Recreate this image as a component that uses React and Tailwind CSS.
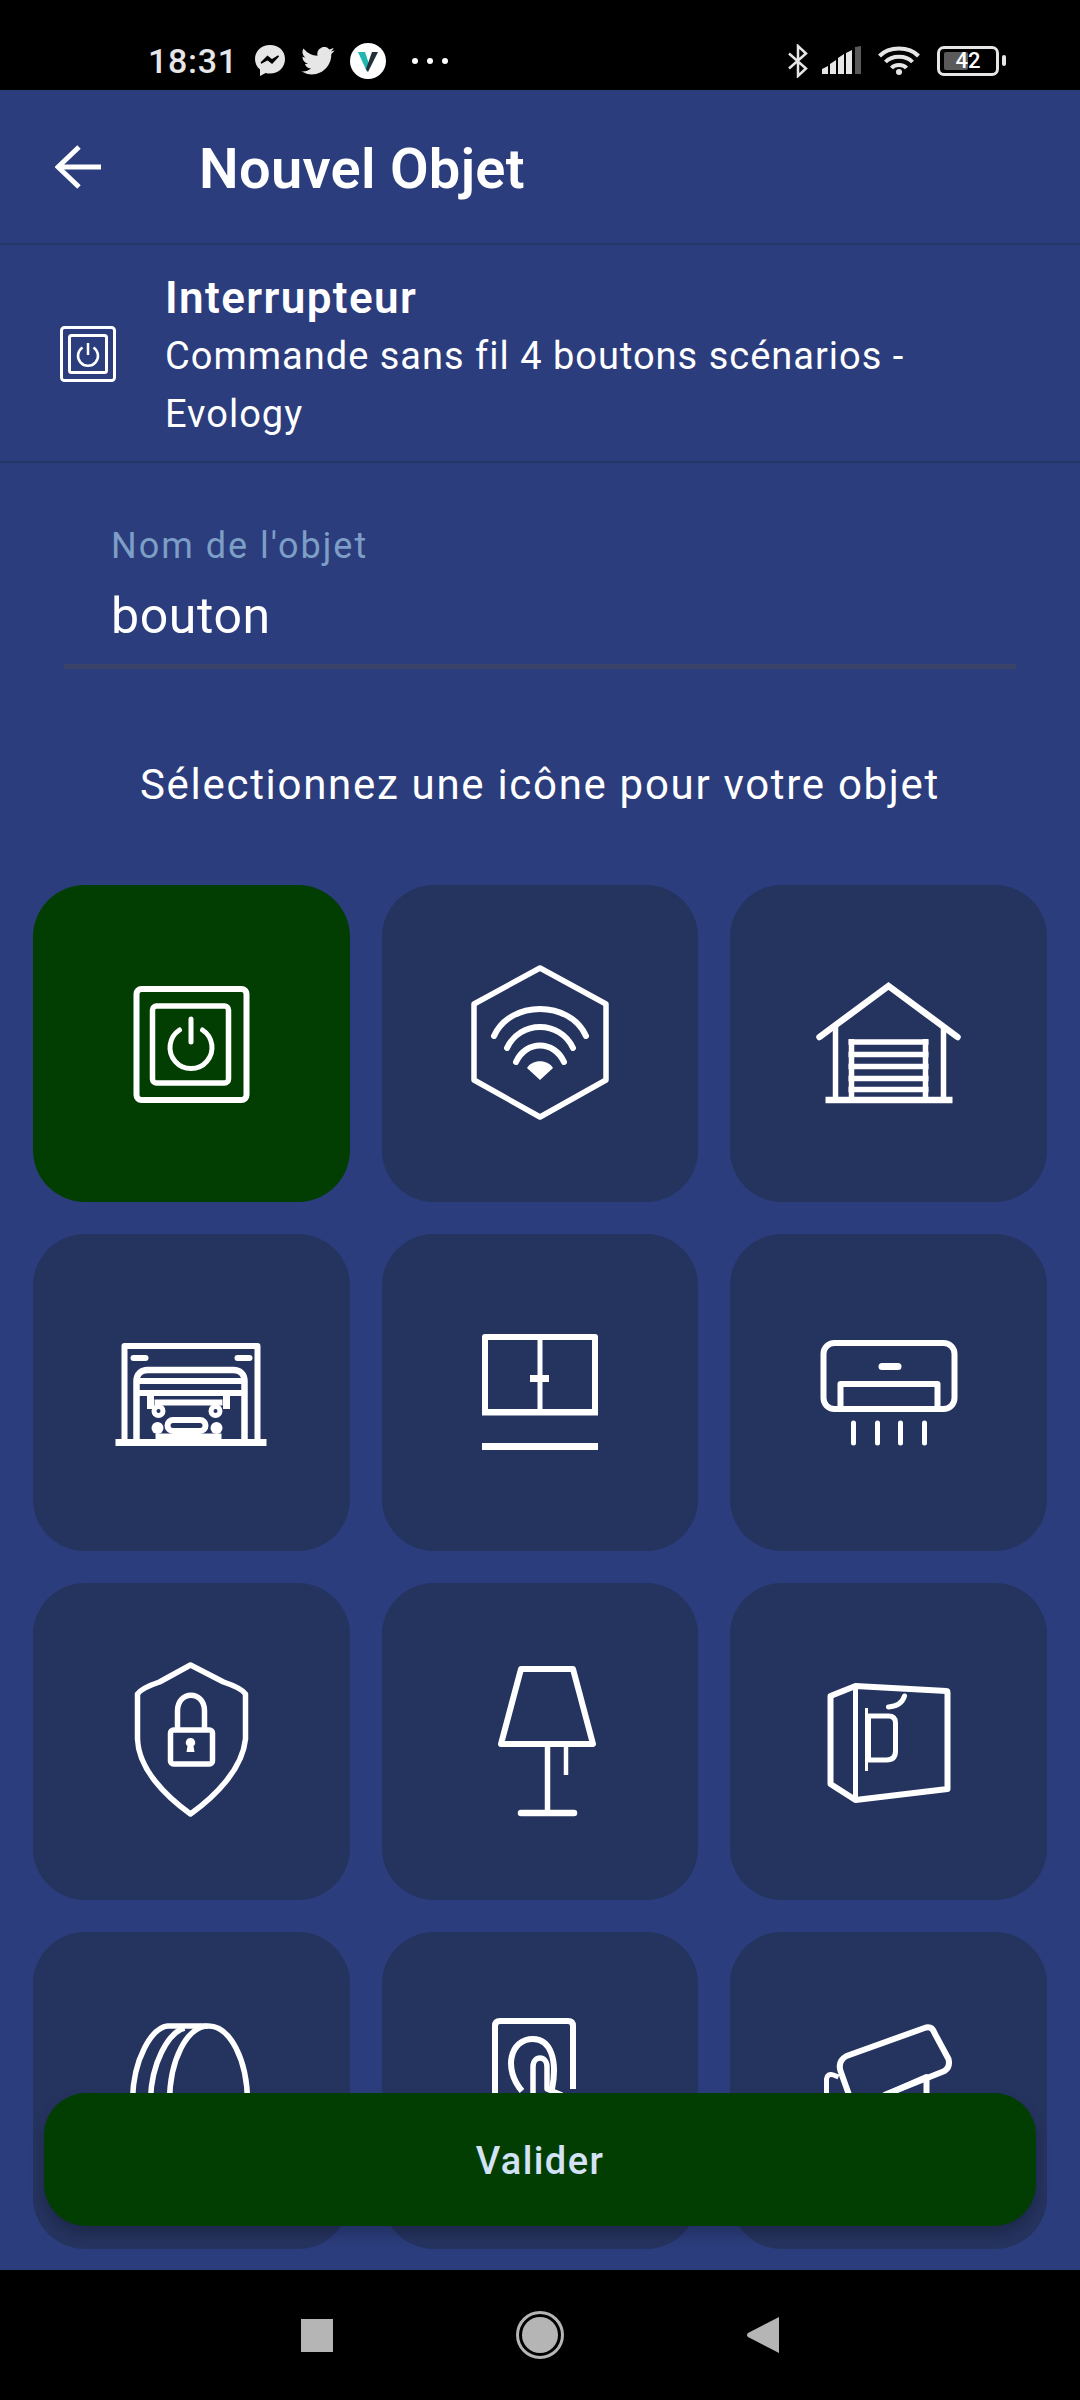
import React from "react";

// icons are drawn in page coordinates, the viewBox is centred on the tile
function Icon({ cx, cy, size = 180, children }) {
  return (
    <svg
      width={size}
      height={size}
      viewBox={`${cx - size / 2} ${cy - size / 2} ${size} ${size}`}
      fill="none"
      stroke="#fff"
      strokeWidth="6"
      strokeLinejoin="round"
      className="overflow-visible shrink-0"
    >
      {children}
    </svg>
  );
}

function PowerIcon() {
  return (
    <Icon cx={191.5} cy={1044}>
      <rect x="137" y="989" width="110" height="111" rx="5" />
      <rect x="153" y="1006" width="76" height="77" rx="4" strokeWidth="5.5" />
      <path d="M180 1030a21 21 0 1 0 23 0" strokeWidth="5" strokeLinecap="round" />
      <path d="M191.5 1019v23" strokeWidth="5" strokeLinecap="round" />
    </Icon>
  );
}

function WifiHexIcon() {
  return (
    <Icon cx={540} cy={1044}>
      <path d="M540 968L606 1004V1080L540 1117L474 1080V1004Z" strokeWidth="5.5" />
      <path d="M494 1036C510 1000 570 1000 586 1036" strokeLinecap="round" />
      <path d="M507 1048C520 1020 560 1020 573 1048" strokeLinecap="round" />
      <path d="M516 1062C526 1040 554 1040 564 1062" strokeLinecap="round" />
      <path d="M540 1080L527 1068C532 1059 548 1059 553 1068Z" fill="#fff" stroke="none" />
    </Icon>
  );
}

function GarageIcon() {
  return (
    <Icon cx={888.5} cy={1044}>
      <path d="M819 1037L888 986L957 1037" strokeWidth="6.5" strokeLinecap="round" strokeLinejoin="miter" />
      <path d="M835 1026V1097M943 1026V1097" strokeWidth="5.5" />
      <path d="M825 1100H952" strokeWidth="6.5" />
      <path d="M851 1039V1097M925 1039V1097" strokeWidth="5.5" />
      <path d="M848 1042H928M848 1054.5H928M848 1066.5H928M848 1078.5H928M848 1089.5H928" strokeWidth="5.5" />
    </Icon>
  );
}

function CarGarageIcon() {
  return (
    <Icon cx={191.5} cy={1394}>
      <path d="M125 1443V1347H258V1443" />
      <path d="M116 1443.5H267" strokeWidth="7" />
      <rect x="131" y="1356" width="18" height="6" rx="3" fill="#fff" stroke="none" />
      <rect x="235" y="1356" width="18" height="6" rx="3" fill="#fff" stroke="none" />
      <path d="M137 1441V1382C137 1375 142 1371 148 1371H234C240 1371 245 1375 245 1382V1441" strokeWidth="6.5" />
      <path d="M137 1382H245M137 1394H245" />
      <path d="M151 1394V1410M227 1394V1410" strokeWidth="7" />
      <path d="M155 1403.5H223" />
      <circle cx="159" cy="1412" r="4.5" strokeWidth="5" />
      <circle cx="216" cy="1412" r="4.5" strokeWidth="5" />
      <circle cx="158" cy="1429" r="6" fill="#fff" stroke="none" />
      <circle cx="217" cy="1429" r="6" fill="#fff" stroke="none" />
      <rect x="168" y="1421" width="38" height="11" rx="5.5" />
      <path d="M156 1437.5H222" />
    </Icon>
  );
}

function WindowIcon() {
  return (
    <Icon cx={540} cy={1394}>
      <path d="M485 1338H595V1413H485Z" />
      <path d="M482 1413.5H598" />
      <path d="M540 1338V1411" strokeWidth="5" />
      <path d="M530 1379.5H549" strokeWidth="7" />
      <path d="M482 1447.5H598" strokeWidth="7" />
    </Icon>
  );
}

function AcIcon() {
  return (
    <Icon cx={888.5} cy={1394}>
      <rect x="823" y="1344" width="131" height="66" rx="11" />
      <rect x="878" y="1364" width="23" height="7" rx="3.5" fill="#fff" stroke="none" />
      <path d="M840 1410V1385H937V1410" />
      <path d="M853 1424V1444M877 1424V1444M900 1424V1444M924 1424V1444" strokeWidth="5" strokeLinecap="round" />
    </Icon>
  );
}

function ShieldIcon() {
  return (
    <Icon cx={191.5} cy={1743}>
      <path d="M191 1666L160 1683Q142 1689 138 1695V1740C139 1770 166 1797 191 1815C216 1797 243 1770 246 1740V1695Q242 1689 224 1683Z" strokeWidth="5.5" />
      <rect x="171" y="1731" width="42" height="34" rx="3" strokeWidth="5.5" />
      <path d="M178 1730V1712C178 1691 205 1691 205 1712V1730" strokeWidth="5.5" />
      <path d="M191 1739a4.5 4.5 0 0 1 3 8l1 6h-8l1-6a4.5 4.5 0 0 1 3-8Z" fill="#fff" stroke="none" />
    </Icon>
  );
}

function LampIcon() {
  return (
    <Icon cx={540} cy={1743}>
      <path d="M521 1670H573L593 1745H501Z" />
      <path d="M547.500 1748V1812" strokeWidth="5.5" />
      <path d="M521 1814H574" strokeWidth="6.5" strokeLinecap="round" />
      <path d="M566 1748V1776" strokeWidth="4.5" />
    </Icon>
  );
}

function BoxIcon() {
  return (
    <Icon cx={888.5} cy={1743}>
      <path d="M830 1697L855 1687L946 1692Q947 1692 947 1694V1790L855 1801L830 1785Z" />
      <path d="M855 1688V1800" strokeWidth="5" />
      <path d="M868 1717H888Q895 1717 895 1724V1752Q895 1761 886 1761H868Z" strokeWidth="5" />
      <path d="M866 1709V1772" strokeWidth="3" />
      <path d="M888 1708Q901 1707 904 1697" strokeWidth="5" strokeLinecap="round" />
    </Icon>
  );
}

function DiscIcon() {
  return (
    <Icon cx={191.5} cy={2092}>
      <ellipse cx="209" cy="2103" rx="39" ry="76" strokeWidth="5.5" />
      <path d="M208 2027H168C152 2029 134 2060 133 2100" strokeWidth="5.5" />
      <path d="M185 2029C168 2034 152 2065 151 2100" strokeWidth="5.5" />
    </Icon>
  );
}

function TouchIcon() {
  return (
    <Icon cx={540} cy={2092}>
      <path d="M495 2100V2027Q495 2022 500 2022H568Q573 2022 573 2027V2090" />
      <path d="M522 2092C503 2070 510 2040 533 2040C550 2040 558 2060 552 2090" />
      <path d="M533 2100V2068C533 2056 547 2056 547 2068V2090L562 2096" strokeWidth="5.5" />
    </Icon>
  );
}

function CameraIcon() {
  return (
    <Icon cx={888.5} cy={2092}>
      <path d="M850 2100L840 2072Q837 2062 846 2057L924 2029Q931 2026 934 2034L948 2060Q950 2068 944 2072L884 2096" />
      <path d="M840 2100L826 2098V2080Q827 2074 833 2076L838 2078" strokeWidth="5" />
      <path d="M880 2098L926 2078V2100" />
    </Icon>
  );
}

const tiles = [
  PowerIcon, WifiHexIcon, GarageIcon,
  CarGarageIcon, WindowIcon, AcIcon,
  ShieldIcon, LampIcon, BoxIcon,
  DiscIcon, TouchIcon, CameraIcon,
];

function StatusBar() {
  return (
    <div className="h-[90px] bg-black flex items-center pt-[31px] pl-[148px] shrink-0 text-[#e6e6e6]">
      <span className="w-[106px] text-[34px] font-medium leading-none tracking-[0.7px]">18:31</span>
      <svg width="32" height="34" viewBox="0 0 32 34" className="mr-[15px]">
        <path d="M16 1C7.500 1 1 7 1 15c0 4.300 1.900 8 5 10.500V32l5.600-3c1.400.4 2.900.6 4.400.6 8.500 0 15-6.200 15-14.600S24.500 1 16 1z" fill="#e6e6e6" />
        <path d="M7 19l6.500-6.500 4.500 3.500 6.500-4-6.500 7-4.500-3.500z" fill="#000" stroke="#000" strokeWidth="1.500" />
      </svg>
      <svg width="34" height="28" viewBox="0 0 24 20" className="mr-[15px]">
        <path d="M23.900 2.400a9.800 9.800 0 0 1-2.800.8 4.900 4.900 0 0 0 2.100-2.700 9.800 9.800 0 0 1-3.100 1.200 4.900 4.900 0 0 0-8.400 4.500A13.900 13.900 0 0 1 1.600 1a4.900 4.900 0 0 0 1.500 6.600 4.900 4.900 0 0 1-2.200-.6c0 2.400 1.700 4.400 3.900 4.900a4.900 4.900 0 0 1-2.200.1 4.900 4.900 0 0 0 4.600 3.400A9.900 9.900 0 0 1 0 17.400 13.900 13.900 0 0 0 7.500 19.600c9.100 0 14-7.500 14-14v-.6a10 10 0 0 0 2.400-2.600z" fill="#e6e6e6" />
      </svg>
      <svg width="36" height="36" viewBox="0 0 36 36" className="mr-[26px]">
        <circle cx="18" cy="18" r="18" fill="#fff" />
        <path d="M8 9h7l5 15-3 5z" fill="#1fb8ae" />
        <path d="M28 9h-6l-6 17 2 3z" fill="#22303a" />
      </svg>
      <div className="flex gap-[9px]">
        <span className="w-[6px] h-[6px] rounded-full bg-white" />
        <span className="w-[6px] h-[6px] rounded-full bg-white" />
        <span className="w-[6px] h-[6px] rounded-full bg-white" />
      </div>
      <div className="flex-1" />
      <svg width="22" height="34" viewBox="0 0 22 34" fill="none" stroke="#e6e6e6" strokeWidth="2.500" className="mr-[13px]">
        <path d="M2 9.500L19 24.500L11 32V2L19 9.500L2 24.500" />
      </svg>
      <svg width="40" height="29" viewBox="0 0 40 29" className="mr-[16px]">
        <path d="M0 28v-5l6-3v8zM8 28V18l6-4v14zM16 28V12l6-4v20zM24 28V7l6-3v24z" fill="#e6e6e6" />
        <path d="M33 28V1l6-1v28z" fill="#5a5a5a" />
      </svg>
      <svg width="43" height="31" viewBox="0 0 43 31" fill="none" stroke="#e6e6e6" strokeWidth="4" className="mr-[16px]">
        <path d="M1.500 11C11 1 31 1 40.500 11" />
        <path d="M7.500 17C14 10 28 10 34.500 17" />
        <path d="M13.500 23C17 19 25 19 28.500 23" />
        <circle cx="21" cy="27" r="3" fill="#e6e6e6" stroke="none" />
      </svg>
      <div className="relative w-[62px] h-[30px] rounded-[7px] border-[3px] border-[#e6e6e6] mr-[3px] flex items-center justify-center">
        <div className="absolute left-[4px] top-[3px] bottom-[3px] w-[24px] bg-[#5a5a5a] rounded-[2px]" />
        <span className="relative text-[22px] font-medium leading-none text-white">42</span>
      </div>
      <div className="w-[4px] h-[11px] rounded-full bg-[#e6e6e6] mr-[74px]" />
    </div>
  );
}

export default function App() {
  return (
    <div className="w-[1080px] h-[2400px] flex flex-col bg-[#2b3d7c] font-['Roboto',sans-serif] text-white overflow-hidden">
      <StatusBar />

      <main className="relative flex-1 min-h-0 overflow-hidden">
        <header className="h-[155px] flex items-center pl-[55px] border-b-2 border-[#263668]">
          <svg width="46" height="44" viewBox="0 0 46 44" fill="none" stroke="#fff" strokeWidth="5" className="mr-[98px]">
            <path d="M24 2L3 22L24 42" />
            <path d="M3 22H46" />
          </svg>
          <h1 className="text-[56px] font-semibold leading-none tracking-[0.3px] mt-[4px]">Nouvel Objet</h1>
        </header>

        <section className="h-[218px] flex items-center pl-[60px] border-b-2 border-[#263668]">
          <svg width="56" height="56" viewBox="0 0 56 56" fill="none" stroke="#fff" strokeWidth="3" className="mr-[49px] shrink-0 mt-[1px]">
            <rect x="1.500" y="1.500" width="53" height="53" rx="3" />
            <rect x="9.500" y="9.500" width="37" height="37" rx="2" />
            <path d="M22.500 21.500a10 10 0 1 0 11 0M28 17v12" strokeWidth="2.500" />
          </svg>
          <div className="leading-[58px] pt-[6px]">
            <div className="text-[44px] font-semibold tracking-[1.4px]">Interrupteur</div>
            <div className="text-[38px] tracking-[1px] w-[800px]">Commande sans fil 4 boutons scénarios - Evology</div>
          </div>
        </section>

        <div className="mx-[64px] h-[206px] pt-[61px] border-b-[5px] border-[#3b4468]">
          <div className="pl-[47px] text-[36px] leading-[44px] tracking-[2px] text-[#7d9ec6]">Nom de l'objet</div>
          <div className="pl-[47px] mt-[18px] text-[50px] leading-[60px] tracking-[0.6px]">bouton</div>
        </div>

        <p className="mt-[91px] text-center text-[42px] leading-[50px] tracking-[1.7px]">Sélectionnez une icône pour votre objet</p>

        <div className="mt-[75px] px-[33px] grid grid-cols-3 gap-[32px]">
          {tiles.map((Tile, i) => (
            <div
              key={i}
              className={`h-[317px] rounded-[52px] flex items-center justify-center ${i === 0 ? "bg-[#023e02]" : "bg-[#25335f]"}`}
            >
              <Tile />
            </div>
          ))}
        </div>

        <button className="absolute left-[44px] right-[44px] bottom-[44px] h-[133px] pt-[3px] rounded-[42px] bg-[#023e02] shadow-[0_8px_14px_rgba(0,0,0,0.22)] text-[38px] font-medium text-[#d3e2f7] tracking-[1.4px]">
          Valider
        </button>
      </main>

      <nav className="h-[130px] bg-black shrink-0 flex items-center justify-center gap-[183px]">
        <div className="w-[32px] h-[33px] bg-[#b5b5b5]" />
        <div className="w-[48px] h-[48px] rounded-full border-[3px] border-[#b5b5b5] flex items-center justify-center">
          <div className="w-[36px] h-[36px] rounded-full bg-[#b5b5b5]" />
        </div>
        <svg width="32" height="36" viewBox="0 0 32 36">
          <path d="M32 0V36L1 20Q-1 18 1 16Z" fill="#b5b5b5" />
        </svg>
      </nav>
    </div>
  );
}
